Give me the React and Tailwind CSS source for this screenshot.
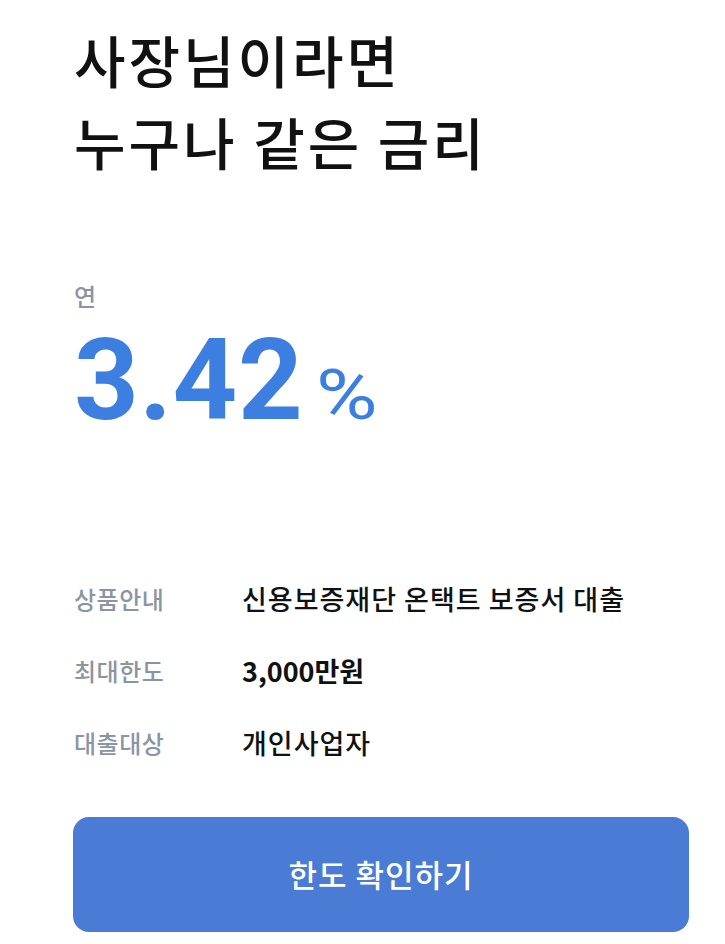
const rows = [
  { label: '상품안내', value: '신용보증재단 온택트 보증서 대출', style: 'font-medium tracking-[1px]' },
  { label: '최대한도', value: '3,000만원', style: 'font-bold tracking-[0px]' },
  { label: '대출대상', value: '개인사업자', style: 'font-medium tracking-[1px]' },
];

const App = () => {
  return (
    <div
      className="min-h-screen w-[725px] bg-white text-[#111]"
      style={{ fontFamily: '"Noto Sans CJK KR", "Noto Sans", sans-serif' }}
    >
      <div className="pl-[74px] pt-[18px]">
        {/* Title */}
        <h1 className="text-[56px] leading-[82px] font-medium tracking-[3px] text-[#111]">
          사장님이라면
          <br />
          누구나 같은 금리
        </h1>

        {/* Rate */}
        <div className="mt-[99px]">
          <p className="text-[24px] leading-[30px] text-[#8b95a1] font-medium">연</p>
          <div className="flex items-baseline mt-[20px]">
            <span
              className="text-[113px] leading-[100px] font-bold text-[#3d7fe0] tracking-[0.5px]"
              style={{ fontFamily: 'Roboto, sans-serif' }}
            >
              3.42
            </span>
            <span
              className="ml-[13px] inline-block origin-left scale-x-[1.2] text-[70px] leading-[70px] text-[#3d7fe0]"
              style={{ fontFamily: 'Roboto, sans-serif' }}
            >
              %
            </span>
          </div>
        </div>

        {/* Product info */}
        <div className="mt-[150px] flex flex-col gap-[36px]">
          {rows.map(row => (
            <div key={row.label} className="flex items-center h-[36px]">
              <span className="w-[168px] text-[24px] text-[#8b95a1] font-medium tracking-[0.5px]">
                {row.label}
              </span>
              <span className={`text-[27px] text-[#111] ${row.style}`}>
                {row.value}
              </span>
            </div>
          ))}
        </div>
      </div>

      {/* CTA */}
      <div className="pl-[73px] pt-[56px]">
        <button className="w-[616px] h-[115px] rounded-[16px] bg-[#4a7bd5] text-white text-[31px] font-medium tracking-[1px]">
          한도 확인하기
        </button>
      </div>
    </div>
  );
};

export default App;
